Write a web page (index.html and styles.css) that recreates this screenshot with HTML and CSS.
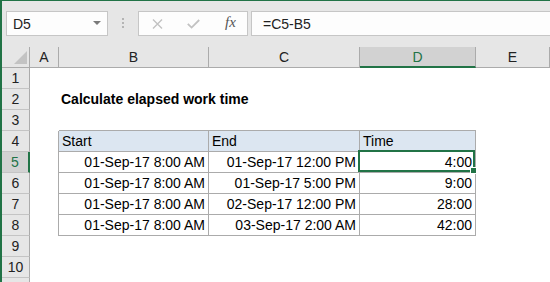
FILE: index.html
```html
<!DOCTYPE html>
<html lang="en">
<head>
    <meta charset="UTF-8">
    <title>Calculate elapsed work time</title>
    <link rel="stylesheet" href="styles.css">
</head>
<body>
    <div class="window">
        <div class="formula-bar">
            <div class="name-box">
                <span>D5</span>
                <span class="caret"></span>
            </div>
            <div class="grip"><i></i><i></i><i></i></div>
            <div class="fx-buttons">
                <svg class="ico-x" width="11" height="10" viewBox="0 0 11 10">
                    <path d="M1 0.5 L10 9.5 M10 0.5 L1 9.5" stroke="#c2c2c2" stroke-width="1.4" fill="none"/>
                </svg>
                <svg class="ico-ok" width="13" height="10" viewBox="0 0 13 10">
                    <path d="M0.8 4.8 L4.6 8.6 L12.2 1" stroke="#c2c2c2" stroke-width="1.8" fill="none"/>
                </svg>
                <span class="fx">fx</span>
            </div>
            <div class="formula">=C5-B5</div>
        </div>

        <div class="sheet">
            <!-- column headers -->
            <div class="corner"><span class="tri"></span></div>
            <div class="hd">A</div>
            <div class="hd">B</div>
            <div class="hd">C</div>
            <div class="hd active">D</div>
            <div class="hd">E</div>

            <div class="rh">1</div>
            <div class="c"></div><div class="c"></div><div class="c"></div><div class="c"></div><div class="c"></div>

            <div class="rh">2</div>
            <div class="c"></div><div class="c title">Calculate elapsed work time</div><div class="c"></div><div class="c"></div><div class="c"></div>

            <div class="rh">3</div>
            <div class="c"></div><div class="c tt"></div><div class="c tt"></div><div class="c tt"></div><div class="c"></div>

            <div class="rh">4</div>
            <div class="c tl"></div>
            <div class="c tc th">Start</div>
            <div class="c tc th">End</div>
            <div class="c tc th">Time</div>
            <div class="c"></div>

            <div class="rh active">5</div>
            <div class="c tl"></div>
            <div class="c tc">01-Sep-17 8:00 AM</div>
            <div class="c tc">01-Sep-17 12:00 PM</div>
            <div class="c tc selected">4:00<span class="sel"><span class="handle"></span></span></div>
            <div class="c"></div>

            <div class="rh">6</div>
            <div class="c tl"></div>
            <div class="c tc">01-Sep-17 8:00 AM</div>
            <div class="c tc">01-Sep-17 5:00 PM</div>
            <div class="c tc">9:00</div>
            <div class="c"></div>

            <div class="rh">7</div>
            <div class="c tl"></div>
            <div class="c tc">01-Sep-17 8:00 AM</div>
            <div class="c tc">02-Sep-17 12:00 PM</div>
            <div class="c tc">28:00</div>
            <div class="c"></div>

            <div class="rh">8</div>
            <div class="c tl"></div>
            <div class="c tc">01-Sep-17 8:00 AM</div>
            <div class="c tc">03-Sep-17 2:00 AM</div>
            <div class="c tc">42:00</div>
            <div class="c"></div>

            <div class="rh">9</div>
            <div class="c"></div><div class="c"></div><div class="c"></div><div class="c"></div><div class="c"></div>

            <div class="rh">10</div>
            <div class="c"></div><div class="c"></div><div class="c"></div><div class="c"></div><div class="c"></div>

            <!-- row 11 only peeks in at the bottom edge -->
            <div class="rh"></div>
            <div class="c"></div><div class="c"></div><div class="c"></div><div class="c"></div><div class="c"></div>
        </div>
    </div>
</body>
</html>
```

FILE: styles.css
```css
html, body {
    margin: 0;
    height: 282px;
    overflow: hidden;
}

body {
    background: #e6e6e6;
    font-family: "Liberation Sans", Arial, sans-serif;
    font-size: 14px;
    color: #000;
}

.window {
    border-top: 1px solid #217346;
    border-left: 2px solid #217346;
    height: 282px;
    box-sizing: border-box;
    overflow: hidden;
}

/* formula bar */
.formula-bar {
    display: flex;
    align-items: stretch;
    height: 25px;
    padding: 10px 0 11px 4px;
}

.name-box {
    width: 102px;
    box-sizing: border-box;
    display: flex;
    align-items: center;
    justify-content: space-between;
    padding: 0 6px 0 6px;
    background: #fdfdfd;
    border: 1px solid #c6c6c6;
    color: #222;
}

.caret {
    width: 0;
    height: 0;
    border-left: 4px solid transparent;
    border-right: 4px solid transparent;
    border-top: 4px solid #7a7a7a;
    margin-top: -2px;
}

.grip {
    width: 30px;
    display: flex;
    flex-direction: column;
    align-items: center;
    justify-content: center;
    gap: 2px;
    margin-top: -1px;
}

.grip i {
    width: 2px;
    height: 2px;
    background: #b4b4b4;
}

.fx-buttons {
    width: 110px;
    box-sizing: border-box;
    display: flex;
    align-items: center;
    padding-left: 13px;
    background: #fdfdfd;
    border: 1px solid #c6c6c6;
}

.ico-x {
    margin-right: 24px;
}

.ico-ok {
    margin-right: 25px;
}

.fx {
    font-family: "Liberation Serif", serif;
    font-style: italic;
    font-size: 15px;
    color: #555;
    margin-top: -3px;
}

.formula {
    flex: 1;
    margin-left: 3px;
    padding-left: 11px;
    display: flex;
    align-items: center;
    background: #fdfdfd;
    border: 1px solid #c6c6c6;
    border-right: none;
    color: #222;
}

/* grid */
.sheet {
    display: grid;
    grid-template-columns: 28px 29px 150px 151px 116px 1fr;
    grid-auto-rows: 21px;
    background: #fff;
}

.sheet > div {
    box-sizing: border-box;
    line-height: 20px;
}

.corner {
    background: #e6e6e6;
    border-right: 1px solid #ababab;
    border-bottom: 1px solid #ababab;
    display: flex;
    align-items: flex-end;
    justify-content: flex-end;
    padding: 0 2px 3px 0;
}

.tri {
    width: 13px;
    height: 13px;
    background: #c3c3c3;
    clip-path: polygon(100% 0, 100% 100%, 0 100%);
}

.hd {
    background: #e6e6e6;
    border-right: 1px solid #ababab;
    border-bottom: 1px solid #ababab;
    text-align: center;
    color: #222;
}

.hd:last-child {
    border-right: none;
}

.hd.active {
    background: #d2d2d2;
    border-bottom: 2px solid #217346;
    color: #217346;
}

.rh {
    background: #e6e6e6;
    border-right: 1px solid #ababab;
    border-bottom: 1px solid #c4c4c4;
    text-align: center;
    color: #222;
}

.rh.active {
    background: #d2d2d2;
    border-right: 2px solid #217346;
    color: #217346;
}

.c {
    white-space: nowrap;
}

.title {
    font-weight: bold;
    padding-left: 2px;
    overflow: visible;
}

.tt {
    border-bottom: 1px solid #ababab;
}

.tl {
    border-right: 1px solid #ababab;
}

.tc {
    border-right: 1px solid #ababab;
    border-bottom: 1px solid #ababab;
    text-align: right;
    padding-right: 3px;
}

.th {
    background: #dce6f1;
    text-align: left;
    padding-left: 3px;
}

.selected {
    position: relative;
}

.sel {
    position: absolute;
    top: -2px;
    left: -2px;
    right: 0;
    bottom: 0;
    border: 2px solid #217346;
}

.handle {
    position: absolute;
    right: -4px;
    bottom: -4px;
    width: 5px;
    height: 5px;
    background: #217346;
    border: 1px solid #fff;
}
```
